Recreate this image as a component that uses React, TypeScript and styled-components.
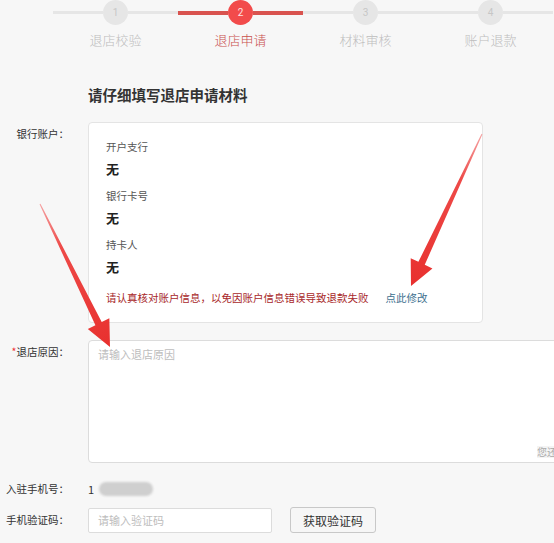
import React from "react";
import styled, { createGlobalStyle } from "styled-components";

const Global = createGlobalStyle`
  html, body { margin: 0; padding: 0; }
  body {
    background: #f7f7f7;
    overflow: hidden;
    font-family: "Noto Sans CJK SC", "Noto Sans", sans-serif;
    color: #333;
  }
  * { box-sizing: border-box; }
`;

const Page = styled.div`
  position: relative;
  width: 554px;
  height: 543px;
  overflow: hidden;
`;

const Stepper = styled.div`
  display: flex;
  padding-left: 53px;
`;

const Step = styled.div`
  width: 125px;
  display: flex;
  flex-direction: column;
  align-items: center;
`;

const TrackRow = styled.div`
  width: 100%;
  display: flex;
  align-items: center;
  height: 25px;
`;

const Track = styled.div<{ $active?: boolean }>`
  flex: 1;
  height: ${(p) => (p.$active ? "4px" : "3px")};
  background: ${(p) => (p.$active ? "#d9534f" : "#e6e6e6")};
`;

const Circle = styled.div<{ $active?: boolean }>`
  width: 25px;
  height: 25px;
  border-radius: 50%;
  background: ${(p) => (p.$active ? "#f24b4b" : "#e6e6e6")};
  color: ${(p) => (p.$active ? "#ffe3e3" : "#c6c6c6")};
  font-family: "Roboto", sans-serif;
  font-size: 10px;
  display: flex;
  align-items: center;
  justify-content: center;
`;

const StepLabel = styled.div<{ $active?: boolean }>`
  margin-top: 7px;
  font-size: 13px;
  line-height: 16px;
  font-weight: 300;
  color: ${(p) => (p.$active ? "#c9504e" : "#bdbdbd")};
`;

const Title = styled.div`
  margin: 37px 0 0 88px;
  font-size: 14.5px;
  line-height: 20px;
  font-weight: 700;
  color: #333;
`;

const Row = styled.div<{ $mt: number }>`
  display: grid;
  grid-template-columns: 69px 1fr;
  column-gap: 19px;
  margin-top: ${(p) => p.$mt}px;
  align-items: start;
`;

const Label = styled.div<{ $pt?: number }>`
  text-align: right;
  font-size: 10.5px;
  line-height: 14px;
  color: #333;
  padding-top: ${(p) => p.$pt ?? 0}px;
  white-space: nowrap;
`;

const Star = styled.span`
  color: #e33;
`;

const Card = styled.div`
  width: 395px;
  height: 201px;
  background: #fff;
  border: 1px solid #e4e4e4;
  border-radius: 4px;
  padding: 17px 17px 0;
  display: flex;
  flex-direction: column;
`;

const FieldLabel = styled.div<{ $mt?: number }>`
  font-size: 10.5px;
  line-height: 14px;
  color: #555;
  margin-top: ${(p) => p.$mt ?? 0}px;
`;

const FieldValue = styled.div`
  margin-top: 5px;
  font-size: 13px;
  line-height: 20px;
  font-weight: 700;
  color: #222;
`;

const NoteRow = styled.div`
  margin-top: 14px;
  display: flex;
  gap: 17px;
  font-size: 10.5px;
  line-height: 14px;
`;

const Warn = styled.span`
  color: #a8282a;
`;

const Link = styled.span`
  color: #3d6f8e;
`;

const AreaWrap = styled.div`
  position: relative;
  width: 520px;
  height: 123px;
  background: #fff;
  border: 1px solid #dcdcdc;
  border-radius: 4px;
  padding: 6px 9px;
`;

const Placeholder = styled.div`
  font-size: 11px;
  line-height: 14px;
  color: #bdbdbd;
`;

const Counter = styled.div`
  position: absolute;
  left: 448px;
  bottom: 4px;
  font-size: 10px;
  line-height: 12px;
  color: #aaa;
  background: #f4f4f4;
  white-space: nowrap;
`;

const PhoneValue = styled.div`
  display: flex;
  align-items: center;
  height: 14px;
  font-size: 11px;
  color: #333;
`;

const Blur = styled.div`
  width: 54px;
  height: 14px;
  margin-left: 5px;
  border-radius: 7px;
  background: #cfcfcf;
  filter: blur(1px);
`;

const CodeLine = styled.div`
  display: flex;
  align-items: center;
`;

const Input = styled.div`
  width: 184px;
  height: 25px;
  background: #fff;
  border: 1px solid #dcdcdc;
  border-radius: 2px;
  padding: 0 9px;
  display: flex;
  align-items: center;
  font-size: 11px;
  color: #bdbdbd;
`;

const Button = styled.div`
  margin-left: 18px;
  width: 86px;
  height: 26px;
  border: 1px solid #c8c8c8;
  border-radius: 3px;
  background: #f6f6f6;
  display: flex;
  align-items: center;
  justify-content: center;
  font-size: 12px;
  color: #333;
`;

const Arrows = styled.svg`
  position: absolute;
  left: 0;
  top: 0;
  pointer-events: none;
`;

const steps = ["退店校验", "退店申请", "材料审核", "账户退款"];

export default function App() {
  return (
    <Page>
      <Global />
      <Stepper>
        {steps.map((s, i) => {
          const active = i === 1;
          return (
            <Step key={s}>
              <TrackRow>
                <Track $active={active} />
                <Circle $active={active}>{i + 1}</Circle>
                <Track $active={active} />
              </TrackRow>
              <StepLabel $active={active}>{s}</StepLabel>
            </Step>
          );
        })}
      </Stepper>

      <Title>请仔细填写退店申请材料</Title>

      <Row $mt={17}>
        <Label $pt={5}>银行账户：</Label>
        <Card>
          <FieldLabel>开户支行</FieldLabel>
          <FieldValue>无</FieldValue>
          <FieldLabel $mt={10}>银行卡号</FieldLabel>
          <FieldValue>无</FieldValue>
          <FieldLabel $mt={10}>持卡人</FieldLabel>
          <FieldValue>无</FieldValue>
          <NoteRow>
            <Warn>请认真核对账户信息，以免因账户信息错误导致退款失败</Warn>
            <Link>点此修改</Link>
          </NoteRow>
        </Card>
      </Row>

      <Row $mt={17}>
        <Label $pt={5}>
          <Star>*</Star>退店原因：
        </Label>
        <AreaWrap>
          <Placeholder>请输入退店原因</Placeholder>
          <Counter>您还可以输入200字</Counter>
        </AreaWrap>
      </Row>

      <Row $mt={19}>
        <Label>入驻手机号：</Label>
        <PhoneValue>
          1<Blur />
        </PhoneValue>
      </Row>

      <Row $mt={11}>
        <Label $pt={6}>手机验证码：</Label>
        <CodeLine>
          <Input>请输入验证码</Input>
          <Button>获取验证码</Button>
        </CodeLine>
      </Row>

      <Arrows width="554" height="543" viewBox="0 0 554 543">
        <defs>
          <linearGradient id="ga" gradientUnits="userSpaceOnUse" x1="40" y1="204" x2="110" y2="347">
            <stop offset="0" stopColor="#f5a3a3" />
            <stop offset="0.3" stopColor="#ee4a48" />
            <stop offset="1" stopColor="#e8302e" />
          </linearGradient>
          <linearGradient id="gb" gradientUnits="userSpaceOnUse" x1="482" y1="134" x2="411" y2="286">
            <stop offset="0" stopColor="#f5a3a3" />
            <stop offset="0.3" stopColor="#ee4a48" />
            <stop offset="1" stopColor="#e8302e" />
          </linearGradient>
        </defs>
        <polygon
          fill="url(#ga)"
          points="39.55,204.22 95.43,325.19 87.79,328.93 110,347 109.35,318.37 101.71,322.11 40.45,203.78"
        />
        <polygon
          fill="url(#gb)"
          points="482.45,134.21 424.75,264.83 432.45,268.43 411,286 410.71,258.27 418.41,261.87 481.55,133.79"
        />
      </Arrows>
    </Page>
  );
}
